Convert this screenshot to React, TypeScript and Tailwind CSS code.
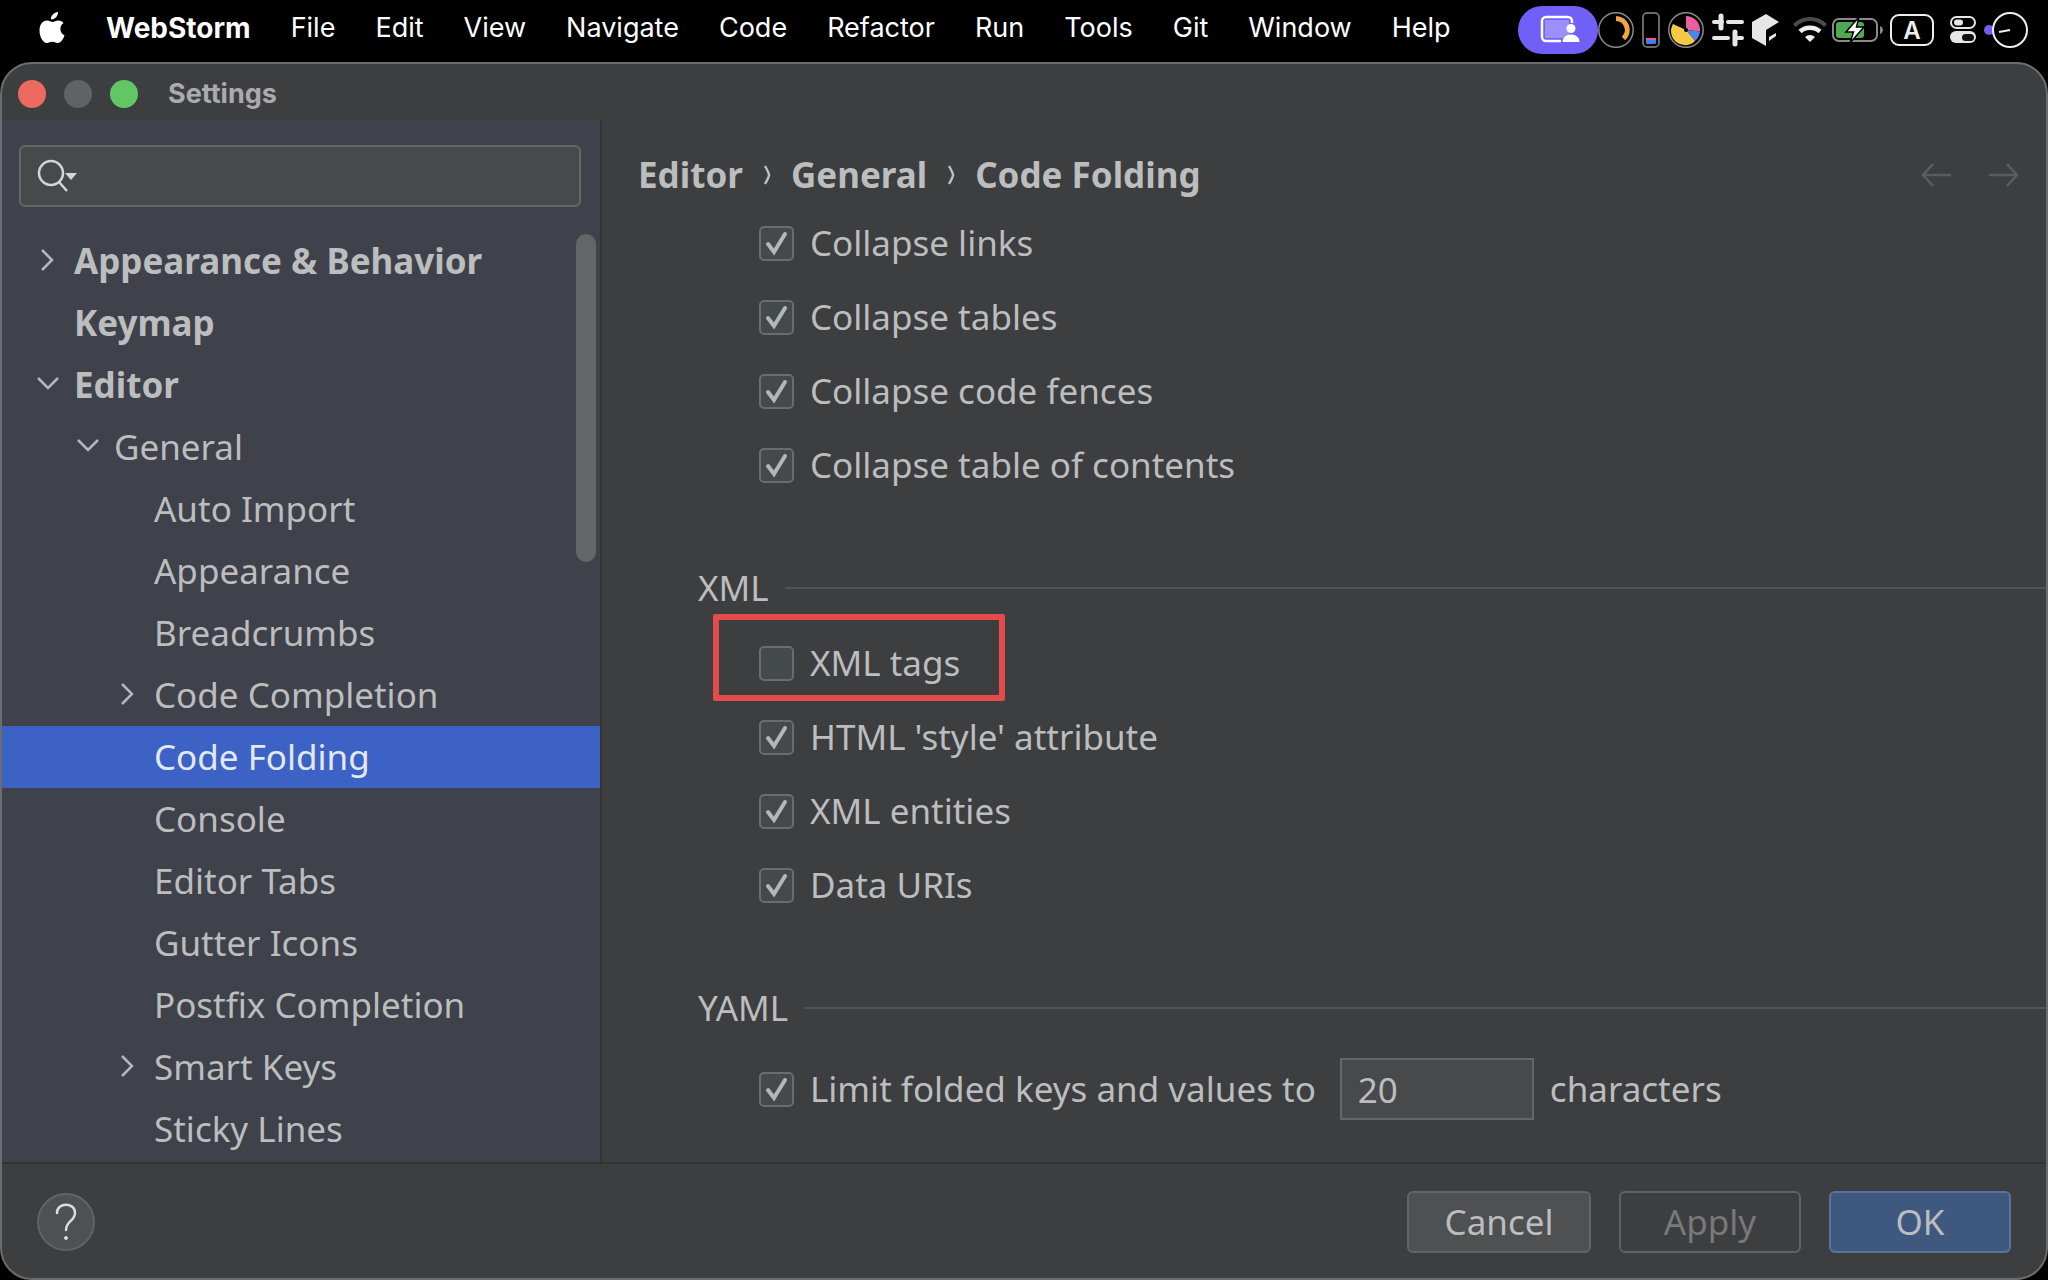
import React, { useState } from 'react'

const treeItems = [
  { label: 'Appearance & Behavior', level: 0, state: 'closed' },
  { label: 'Keymap', level: 0 },
  { label: 'Editor', level: 0, state: 'open' },
  { label: 'General', level: 1, state: 'open' },
  { label: 'Auto Import', level: 2 },
  { label: 'Appearance', level: 2 },
  { label: 'Breadcrumbs', level: 2 },
  { label: 'Code Completion', level: 2, state: 'closed' },
  { label: 'Code Folding', level: 2 },
  { label: 'Console', level: 2 },
  { label: 'Editor Tabs', level: 2 },
  { label: 'Gutter Icons', level: 2 },
  { label: 'Postfix Completion', level: 2 },
  { label: 'Smart Keys', level: 2, state: 'closed' },
  { label: 'Sticky Lines', level: 2 },
]

const menus = ['File', 'Edit', 'View', 'Navigate', 'Code', 'Refactor', 'Run', 'Tools', 'Git', 'Window', 'Help']

// indent of the expand arrow for each tree level
const indents = ['pl-[30px]', 'pl-[70px]', 'pl-[110px]']

function StatusIcons() {
  return (
    <svg width="512" height="60" viewBox="1518 0 512 60" fill="none" className="shrink-0" aria-hidden="true">
      {/* screen sharing pill */}
      <rect x="1518" y="6" width="80" height="48" rx="24" fill="#7060f8" />
      <rect x="1545" y="20" width="24" height="18" fill="#9a8ffb" />
      <path d="M1561 41h-15a4 4 0 0 1-4-4V21a4 4 0 0 1 4-4h22a4 4 0 0 1 4 4v2" stroke="#fff" strokeWidth="2.5" />
      <circle cx="1571" cy="28.5" r="4.5" fill="#fff" />
      <path d="M1562.500 42c0-5 4-7.500 8.500-7.500s8.500 2.500 8.500 7.500z" fill="#fff" />
      {/* cpu ring */}
      <circle cx="1616" cy="30" r="17.200" stroke="#8a8a8a" strokeWidth="1.500" />
      <path d="M1616 18.500a11.500 11.500 0 0 1 7.500 20" stroke="#f0a63c" strokeWidth="5" />
      {/* memory bar */}
      <rect x="1643" y="13" width="16" height="34" rx="4" stroke="#8a8a8a" strokeWidth="1.500" />
      <rect x="1646" y="38" width="10" height="6" rx="1" fill="#3f7bf6" />
      <path d="M1646 39h10" stroke="#e85a9c" strokeWidth="2" />
      {/* usage pie */}
      <circle cx="1686" cy="30" r="17.200" stroke="#8a8a8a" strokeWidth="1.500" />
      <path d="M1686 30V16a14 14 0 0 1 14 15.500z" fill="#e8609f" />
      <path d="M1686 30l14 1.500a14 14 0 0 1-5 9.500z" fill="#4a86f0" />
      <path d="M1686 30l9 11a14 14 0 0 1-22-17z" fill="#f6c945" />
      <circle cx="1686" cy="30" r="2" fill="#000" />
      {/* sliders */}
      <path d="M1714 22h8M1728 22h14M1714 38h14M1736 38h6" stroke="#e6e6e6" strokeWidth="4" strokeLinecap="round" />
      <path d="M1721 16v12M1735 32v12" stroke="#e6e6e6" strokeWidth="5" strokeLinecap="round" />
      {/* cube */}
      <path d="M1766 14l13 8-13 8v16l-14-8V22z" fill="#e6e6e6" />
      <path d="M1769 37l7-4v3l-7 5z" fill="#e6e6e6" />
      {/* wifi */}
      <path d="M1794.500 25.500a22 22 0 0 1 31 0" stroke="#4a4a4a" strokeWidth="4" />
      <path d="M1800 31.500a15 15 0 0 1 20 0" stroke="#eee" strokeWidth="4.500" />
      <path d="M1810 42l-5-5a7 7 0 0 1 10 0z" fill="#eee" />
      {/* battery */}
      <rect x="1833" y="19" width="44" height="22" rx="6" stroke="#8a8a8a" strokeWidth="2" />
      <rect x="1836" y="22" width="28" height="16" rx="3" fill="#4fa950" />
      <path d="M1880 26c4 2 4 6 0 8z" fill="#8a8a8a" />
      <path d="M1859 17l-13 15h7.500l-3.500 11 14-16h-7.500z" fill="#fff" stroke="#000" strokeWidth="1.500" />
      {/* input source */}
      <rect x="1891" y="15" width="42" height="30" rx="8" stroke="#eee" strokeWidth="2" />
      <text x="1912" y="39" textAnchor="middle" fontFamily="Inter, sans-serif" fontSize="24" fontWeight="600" fill="#eee">A</text>
      {/* control centre */}
      <rect x="1951" y="17" width="24" height="11" rx="5.500" stroke="#e6e6e6" strokeWidth="2" />
      <rect x="1954" y="19.500" width="9" height="6" rx="3" fill="#e6e6e6" />
      <rect x="1950" y="31" width="26" height="12" rx="6" fill="#e6e6e6" />
      <rect x="1962" y="34" width="12" height="7" rx="3.500" fill="#111" />
      {/* clock */}
      <circle cx="1989" cy="30" r="5" fill="#6a5ff0" />
      <circle cx="2010" cy="30" r="17" fill="#000" stroke="#eee" strokeWidth="2" />
      <path d="M1999 32l11-2" stroke="#eee" strokeWidth="2" />
    </svg>
  )
}

function MenuBar() {
  return (
    <header className="flex h-[62px] shrink-0 items-start justify-between bg-black pr-[18px] pl-[38px] font-['Inter',sans-serif] text-[27px] text-white">
      <nav className="flex h-14 items-center gap-10">
        <svg width="28" height="36" viewBox="0 0 28 36" fill="#fff" aria-hidden="true">
          <path d="M20 2c.2 4-3.200 7.500-7 7.500-.5-4 3.200-7 7-7.500zM25.500 13c-4.500 3-4 10 1 12.500C25 30 22.500 33 19.500 33c-2 0-3-1.200-5.200-1.200S11 33 9 33C5 33 1.500 27 1.500 20.500 1.500 14 5 10.500 9 10.500c2.500 0 4 1.500 5.500 1.500 1.700 0 3.500-1.500 6-1.500 2 0 4 1 5 2.500z" />
        </svg>
        <button className="text-[28px] font-bold">WebStorm</button>
        {menus.map((m) => <button key={m}>{m}</button>)}
      </nav>
      <StatusIcons />
    </header>
  )
}

function Chevron({ state }: { state?: string }) {
  return (
    <span className="flex w-[42px] shrink-0 pl-1">
      {state && (
        <svg width="24" height="24" viewBox="0 0 24 24" fill="none" stroke="#b4b7bb" strokeWidth="2.500" aria-hidden="true">
          {state === 'open' ? <path d="M2 5l10 10L22 5" /> : <path d="M6 1l10 10L6 21" />}
        </svg>
      )}
    </span>
  )
}

function Sidebar({ selected, onSelect }: { selected: string, onSelect: (s: string) => void }) {
  return (
    <aside className="flex w-[600px] shrink-0 flex-col overflow-hidden border-r-2 border-[#313335] bg-[#3f424a] pt-[25px]">
      <label className="mr-[19px] ml-[17px] mb-[23px] flex h-[62px] shrink-0 items-center rounded-md border-2 border-[#646668] bg-[#47494a] pl-4">
        <svg width="42" height="36" viewBox="0 0 42 36" fill="none" aria-hidden="true">
          <circle cx="14" cy="15" r="12" stroke="#d3d5d6" strokeWidth="2.500" />
          <path d="M22 24l8 9" stroke="#d3d5d6" strokeWidth="2.500" />
          <path d="M28 15h12l-6 7z" fill="#d3d5d6" />
        </svg>
        <input type="text" aria-label="Search settings" className="min-w-0 flex-1 bg-transparent px-2 outline-none" />
      </label>
      <div className="relative">
        <ul>
          {treeItems.map((item, i) => (
            <li key={i}>
              <button
                onClick={() => onSelect(item.label)}
                className={`flex h-[62px] w-full items-center text-left ${indents[item.level]} ${item.level === 0 ? 'font-bold' : ''} ${item.label === selected ? 'bg-[#3d62c6] text-[#e4e8f2]' : ''}`}
              >
                <Chevron state={item.state} />
                {item.label}
              </button>
            </li>
          ))}
        </ul>
        <div className="absolute top-1 right-1 h-[328px] w-5 rounded-full bg-[#636569]" />
      </div>
    </aside>
  )
}

function Check({ label, on = true }: { label: string, on?: boolean }) {
  return (
    <label className="flex h-[74px] items-center gap-4">
      <span className="relative flex size-[35px] shrink-0">
        <input
          type="checkbox"
          defaultChecked={on}
          className="peer size-full appearance-none rounded-[5px] border-2 border-[#6a6c6d] bg-[#44494a]"
        />
        <svg
          viewBox="0 0 35 35"
          fill="none"
          stroke="#b4b6b7"
          strokeWidth="4"
          strokeLinecap="round"
          className="pointer-events-none invisible absolute inset-0 peer-checked:visible"
          aria-hidden="true"
        >
          <path d="M9 18l6 8L26 8" />
        </svg>
      </span>
      {label}
    </label>
  )
}

function Group({ title, children }: { title: string, children: React.ReactNode }) {
  return (
    <section className="pt-12">
      <h2 className="flex h-19 items-center gap-4 pl-24">
        {title}
        <span className="h-[2px] flex-1 bg-[#515355]" />
      </h2>
      <div className="pl-[157px]">{children}</div>
    </section>
  )
}

function Separator() {
  return (
    <svg width="8" height="22" viewBox="0 0 8 22" fill="none" stroke="#bbbdbe" strokeWidth="2.500" aria-hidden="true">
      <path d="M2 2q4 7 4 9t-4 9" />
    </svg>
  )
}

function Content() {
  return (
    <main className="min-w-0 flex-1 overflow-hidden">
      <div className="flex h-[86px] items-end justify-between pr-[26px] pl-9">
        <nav className="flex h-[62px] items-center gap-5 font-bold">
          <a href="#editor">Editor</a>
          <Separator />
          <a href="#general">General</a>
          <Separator />
          <a href="#code-folding">Code Folding</a>
        </nav>
        <div className="flex h-[62px] items-center gap-9">
          <button aria-label="Back">
            <svg width="32" height="26" viewBox="0 0 32 26" fill="none" stroke="#5a5c5e" strokeWidth="2.500">
              <path d="M31 13H3M13 2L3 13l10 11" />
            </svg>
          </button>
          <button aria-label="Forward">
            <svg width="32" height="26" viewBox="0 0 32 26" fill="none" stroke="#5a5c5e" strokeWidth="2.500">
              <path d="M1 13h28M19 2l10 11-10 11" />
            </svg>
          </button>
        </div>
      </div>
      <div className="pl-[157px]">
        <Check label="Collapse links" />
        <Check label="Collapse tables" />
        <Check label="Collapse code fences" />
        <Check label="Collapse table of contents" />
      </div>
      <Group title="XML">
        <div className="relative">
          <div className="pointer-events-none absolute -top-3 -left-[46px] h-[87px] w-[292px] rounded-xs border-6 border-[#e54b4d]" />
          <Check label="XML tags" on={false} />
        </div>
        <Check label="HTML 'style' attribute" />
        <Check label="XML entities" />
        <Check label="Data URIs" />
      </Group>
      <Group title="YAML">
        <div className="flex h-[86px] items-center gap-4">
          <Check label="Limit folded keys and values to" />
          <input
            type="text"
            aria-label="Number of characters"
            defaultValue="20"
            className="ml-2 h-[62px] w-[194px] border-2 border-[#646668] bg-[#47494a] px-4 outline-none"
          />
          characters
        </div>
      </Group>
    </main>
  )
}

export default function App() {
  const [selected, setSelected] = useState('Code Folding')

  return (
    <div className="flex h-screen flex-col bg-black">
      <MenuBar />
      <div className="flex min-h-0 flex-1 flex-col overflow-hidden rounded-[32px] border-2 border-[#6b6c6d] bg-[#3d3e40] font-['Noto_Sans',sans-serif] text-[35px] text-[#bbbdbe]">
        <div className="flex h-14 shrink-0 items-center pt-1 pl-4 font-['Inter',sans-serif]">
          <div className="flex gap-[18px]">
            <button aria-label="Close" className="size-7 rounded-full bg-[#ec6a5f]" />
            <button aria-label="Minimize" className="size-7 rounded-full bg-[#616264]" />
            <button aria-label="Zoom" className="size-7 rounded-full bg-[#62c664]" />
          </div>
          <h1 className="pl-[30px] text-[27px] font-bold text-[#a9abad]">Settings</h1>
        </div>
        <div className="flex min-h-0 flex-1">
          <Sidebar selected={selected} onSelect={setSelected} />
          <Content />
        </div>
        <footer className="flex h-[116px] shrink-0 items-center justify-between border-t-2 border-[#313335] px-[35px] pt-0.5">
          <button aria-label="Help" className="flex size-[58px] items-center justify-center rounded-full border-2 border-[#606264] bg-[#4e5052]">
            <svg width="22" height="38" viewBox="0 0 22 38" fill="none" stroke="#dcdcdc" strokeWidth="2.500">
              <path d="M2 10c0-11 18-11 18 0 0 8-9 8-9 17" strokeLinecap="round" />
              <circle cx="11" cy="35" r="1.500" fill="#dcdcdc" stroke="#dcdcdc" strokeWidth="1" />
            </svg>
          </button>
          <div className="flex gap-7">
            <button className="h-[62px] w-[184px] rounded-md border-2 border-[#626466] bg-[#4e5052]">Cancel</button>
            <button disabled className="h-[62px] w-[182px] rounded-md border-2 border-[#606264] text-[#77797a]">Apply</button>
            <button className="h-[62px] w-[182px] rounded-md border-2 border-[#5a719b] bg-[#3e5880]">OK</button>
          </div>
        </footer>
      </div>
    </div>
  )
}
